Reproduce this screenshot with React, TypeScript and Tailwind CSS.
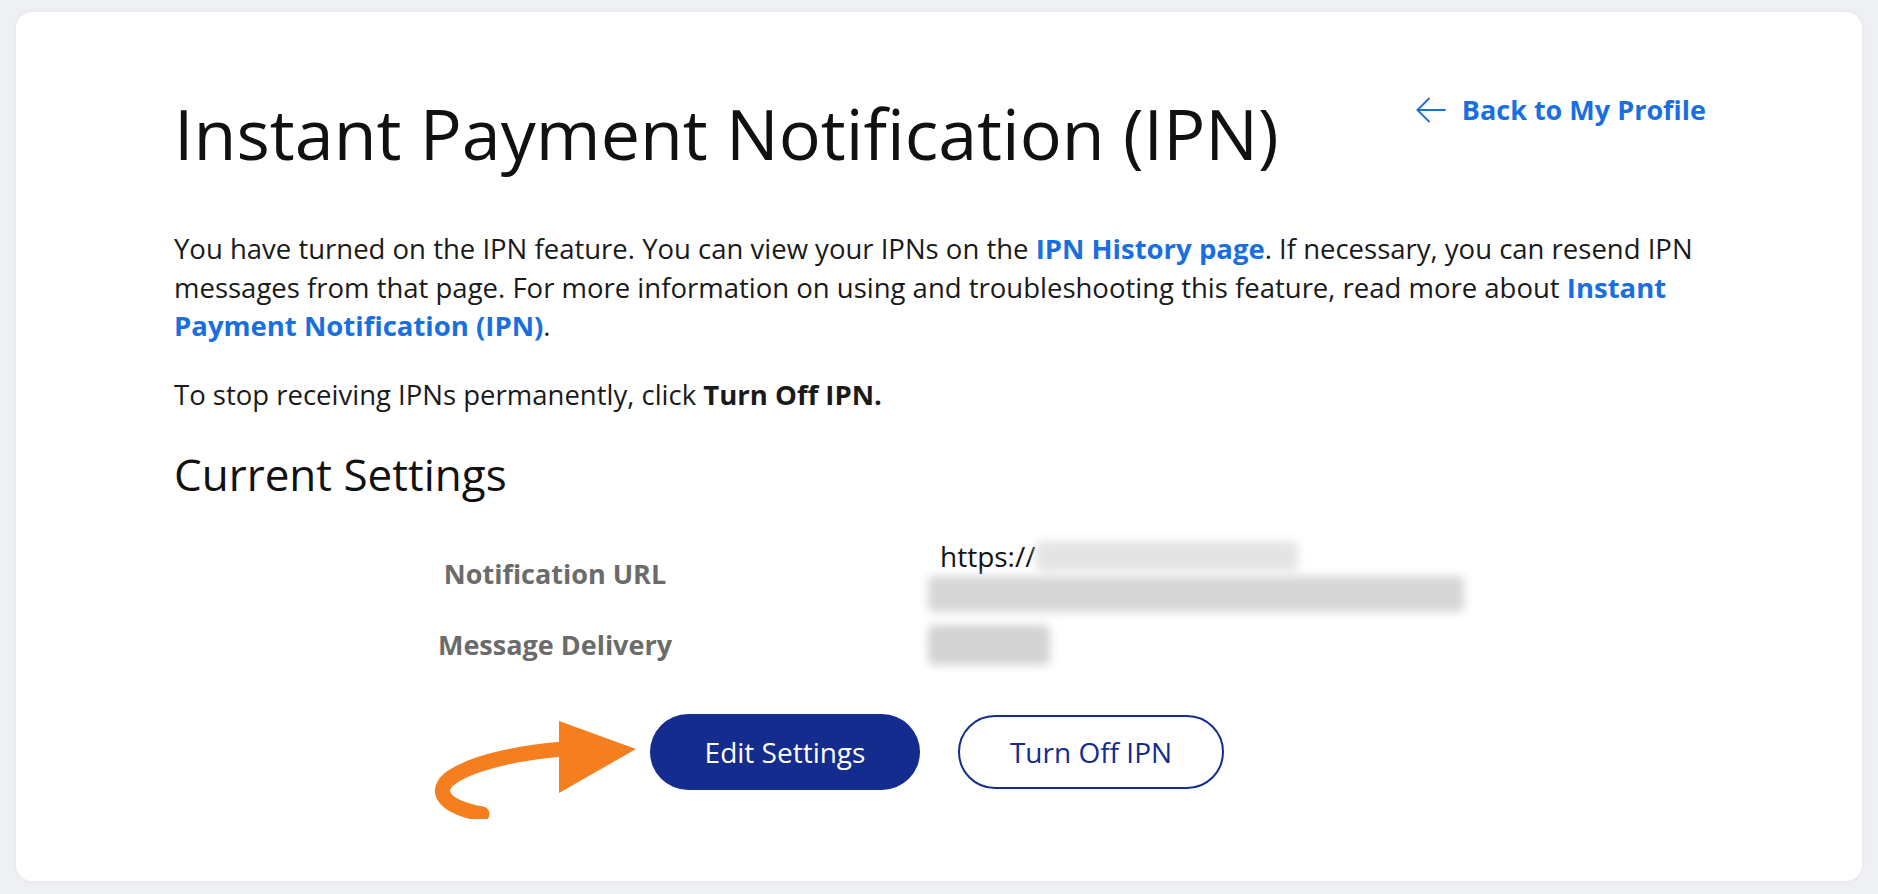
import React from 'react';

const font = { fontFamily: '"Open Sans", "Noto Sans", sans-serif' };

function BackArrow() {
  return (
    <svg width="30" height="26" viewBox="0 0 30 26" fill="none" stroke="#1a6fe0" strokeWidth="1.8" strokeLinecap="round" strokeLinejoin="round">
      <path d="M29 13H1.5" />
      <path d="M13 1.5L1.5 13L13 24.5" />
    </svg>
  );
}

function Blob({ className }: { className: string }) {
  return <span className={`inline-block rounded-md blur-[5px] ${className}`} />;
}

export default function App() {
  return (
    <div className="min-h-screen bg-[#eff0f4] px-4 pt-3 pb-3.5" style={font}>
      <div className="rounded-2xl bg-white pl-[158px] pr-[156px] pt-[86px] pb-[91px] shadow-[0_0_6px_rgba(0,0,0,0.05)]">
        <div className="flex items-start justify-between">
          <h1 className="text-[70px] leading-none text-[#111111]">Instant Payment Notification (IPN)</h1>
          <a href="#" className="-mt-1 flex items-center gap-4 text-[27px] leading-8 font-bold text-[#1a6fe0]">
            <BackArrow />
            Back to My Profile
          </a>
        </div>

        <p className="-mr-[8px] mt-[62px] text-[27.5px] leading-[38.5px] text-[#1a1a1a]">
          You have turned on the IPN feature. You can view your IPNs on the{' '}
          <a href="#" className="font-bold text-[#1a6fe0]">IPN History page</a>. If necessary, you can resend IPN
          messages from that page. For more information on using and troubleshooting this feature, read more about{' '}
          <a href="#" className="font-bold text-[#1a6fe0]">Instant Payment Notification (IPN)</a>.
        </p>

        <p className="mt-[30px] text-[27.5px] leading-[38.5px] text-[#1a1a1a]">
          To stop receiving IPNs permanently, click <span className="font-bold">Turn Off IPN.</span>
        </p>

        <h2 className="mt-9 text-[44px] leading-[48px] text-[#111111]">Current Settings</h2>

        <div className="mt-[38px] ml-[231px] flex flex-col gap-[13px]">
          <div className="flex items-center">
            <div className="w-[300px] text-center text-[27px] leading-10 font-bold text-[#6b6b6b]">Notification URL</div>
            <div className="ml-[235px] flex flex-col text-[28px] leading-10 text-[#111111]">
              <div className="flex items-center">
                <span>https://</span>
                <Blob className="h-[30px] w-[262px] bg-[#e4e4e4]" />
              </div>
              <Blob className="-ml-3 h-[36px] w-[536px] bg-[#d6d6d6]" />
            </div>
          </div>
          <div className="flex items-center">
            <div className="w-[300px] text-center text-[27px] leading-10 font-bold text-[#6b6b6b]">Message Delivery</div>
            <div className="ml-[223px] flex h-10 items-center">
              <Blob className="h-[40px] w-[122px] bg-[#d2d2d2]" />
            </div>
          </div>
        </div>

        <div className="relative mt-[49px] ml-[476px] flex items-center gap-[38px]">
          <svg
            className="absolute -left-[226px] top-[5px]"
            width="220"
            height="100"
            viewBox="0 0 220 100"
            fill="none"
          >
            <path
              d="M58 95C20 88 8 72 28 58C52 42 100 33 140 30"
              stroke="#f57f1f"
              strokeWidth="15"
              strokeLinecap="round"
            />
            <path d="M135 2L212 30L135 74Z" fill="#f57f1f" />
          </svg>
          <button className="h-[76px] w-[270px] rounded-full bg-[#142c8e] text-[28px] text-white">Edit Settings</button>
          <button className="h-[74px] w-[266px] rounded-full border-2 border-[#142c8e] bg-white text-[28px] text-[#142c8e]">
            Turn Off IPN
          </button>
        </div>
      </div>
    </div>
  );
}
